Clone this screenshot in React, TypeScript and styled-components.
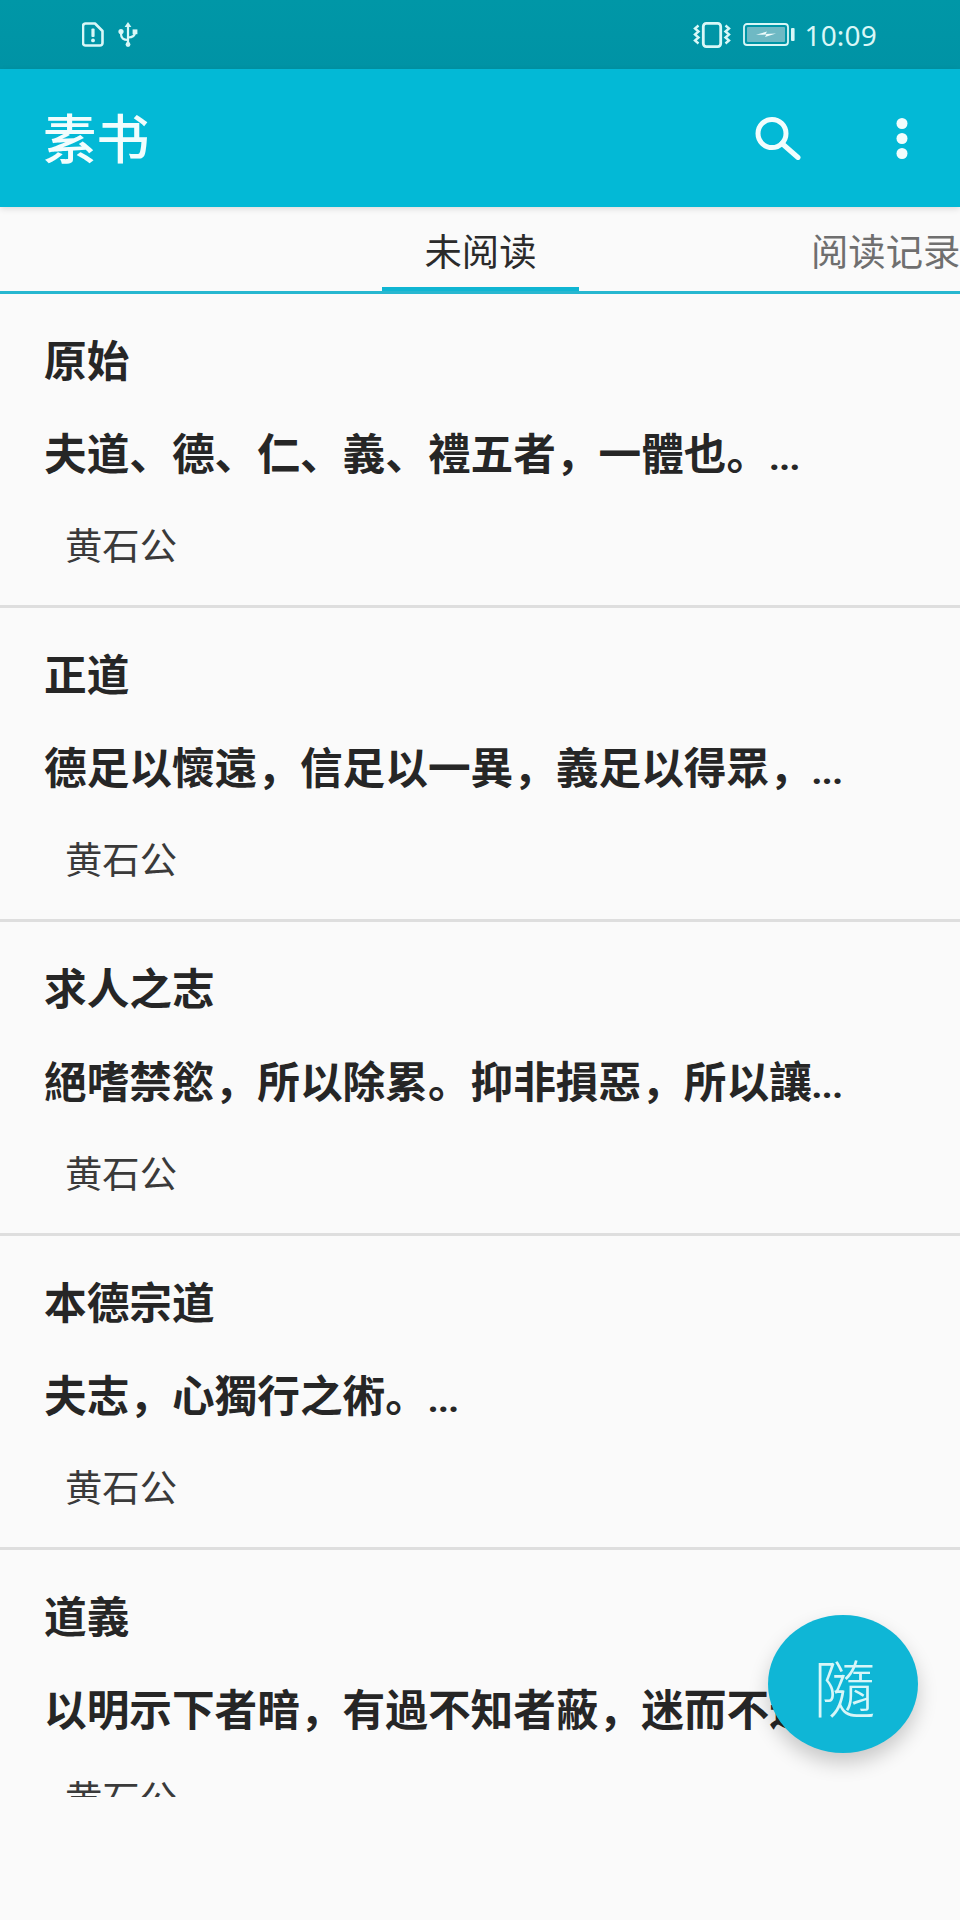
import styled, { createGlobalStyle } from "styled-components";

const GlobalStyle = createGlobalStyle`
  html, body {
    margin: 0;
    padding: 0;
    background: #fafafa;
  }
  * {
    box-sizing: border-box;
  }
`;

const Screen = styled.div`
  width: 960px;
  height: 1920px;
  position: relative;
  overflow: hidden;
  display: flex;
  flex-direction: column;
  background: #fafafa;
  font-family: Roboto, "Noto Sans CJK SC", sans-serif;
  color: #212121;
`;

const StatusBar = styled.div`
  height: 69px;
  flex: none;
  display: flex;
  align-items: center;
  justify-content: space-between;
  padding: 0 83px 0 82px;
  background: linear-gradient(#0097a7, #0093a5);
  color: #d9f7f7;
`;

const StatusGroup = styled.div<{ $gap: number }>`
  display: flex;
  align-items: center;
  gap: ${(p) => p.$gap}px;
`;

const Clock = styled.span`
  font-family: "Noto Sans", "Open Sans", sans-serif;
  font-size: 28px;
  line-height: 1;
  letter-spacing: 0.2px;
`;

const AppBar = styled.header`
  height: 138px;
  flex: none;
  display: flex;
  align-items: center;
  justify-content: space-between;
  padding: 0 52px 0 43px;
  background: #03b9d6;
  color: #f2fdfd;
  position: relative;
  z-index: 1;
  box-shadow: 0 2px 6px rgba(0, 0, 0, 0.12);
`;

const AppTitle = styled.h1`
  margin: 0;
  padding-top: 8px;
  font-size: 53.33px;
  line-height: 1;
  font-weight: 500;
`;

const AppActions = styled.div`
  display: flex;
  align-items: center;
  gap: 95px;
`;

const TabBar = styled.nav`
  height: 87px;
  flex: none;
  display: flex;
  padding-left: 382px;
  border-bottom: 3px solid #27b7d0;
  white-space: nowrap;
  overflow: hidden;
`;

const Tab = styled.div<{ $active?: boolean }>`
  flex: none;
  position: relative;
  width: ${(p) => (p.$active ? "197px" : "auto")};
  margin-left: ${(p) => (p.$active ? "0" : "232px")};
  display: flex;
  align-items: center;
  justify-content: center;
  padding-top: 9px;
  font-size: 37.33px;
  line-height: 1;
  color: ${(p) => (p.$active ? "#2b2b2b" : "#6f6f6f")};

  &::after {
    content: "";
    display: ${(p) => (p.$active ? "block" : "none")};
    position: absolute;
    left: 0;
    right: 0;
    bottom: 0;
    height: 4px;
    background: #0fb5d2;
  }
`;

const ListViewport = styled.div`
  height: 1503px;
  flex: none;
  overflow: hidden;
`;

const Article = styled.article`
  height: 314px;
  padding: 41px 44px 0;
  display: flex;
  flex-direction: column;
  border-bottom: 3px solid #dedede;

  &:last-child {
    border-bottom: none;
  }
`;

const ArticleTitle = styled.h2`
  margin: 0;
  font-size: 42.67px;
  line-height: 54px;
  font-weight: 700;
  color: #262626;
`;

const ArticleBody = styled.p`
  margin: 39px 0 0;
  font-size: 42.67px;
  line-height: 54px;
  font-weight: 700;
  color: #262626;
  white-space: nowrap;
`;

// the dots after a cut-off line sit smaller than the text around them
const MoreDots = styled.span`
  font-size: 34px;
  font-weight: 900;
`;

const ArticleAuthor = styled.div`
  margin: 37px 0 0 21px;
  font-size: 37.33px;
  line-height: 50px;
  color: #3a3a3a;
`;

const Fab = styled.button`
  position: absolute;
  left: 768px;
  top: 1615px;
  width: 150px;
  height: 138px;
  border: none;
  border-radius: 50%;
  padding: 3px 0 0 3px;
  display: flex;
  align-items: center;
  justify-content: center;
  background: #0fb6d6;
  color: #d8f6f8;
  font-family: "Noto Sans CJK TC", "Noto Sans CJK SC", sans-serif;
  font-size: 62px;
  font-weight: 300;
  line-height: 1;
  box-shadow: 0 10px 20px rgba(0, 0, 0, 0.2);
`;

const articles = [
  { title: "原始", body: "夫道、德、仁、義、禮五者，一體也。", more: true },
  { title: "正道", body: "德足以懷遠，信足以一異，義足以得眾，", more: true },
  { title: "求人之志", body: "絕嗜禁慾，所以除累。抑非損惡，所以讓", more: true },
  { title: "本德宗道", body: "夫志，心獨行之術。", more: true },
  { title: "道義", body: "以明示下者暗，有過不知者蔽，迷而不返", more: false },
];

function SimAlertIcon() {
  return (
    <svg width="22" height="25" viewBox="0 0 22 25" fill="none">
      <path
        d="M3.5 1.5h9.5l7.5 7.5v12a2.5 2.5 0 0 1-2.5 2.5h-14.5a2.5 2.5 0 0 1-2.5-2.5v-17a2.5 2.5 0 0 1 2.5-2.5z"
        stroke="currentColor"
        strokeWidth="2.6"
        strokeLinejoin="round"
      />
      <rect x="9.4" y="6.5" width="3.2" height="8.5" rx="1" fill="currentColor" />
      <circle cx="11" cy="18.4" r="1.9" fill="currentColor" />
    </svg>
  );
}

function UsbIcon() {
  return (
    <svg width="20" height="25" viewBox="0 0 20 25" fill="none" stroke="currentColor" strokeWidth="2.2">
      <path d="M10 4v18" />
      <path d="M10 18c-4.5 0-7-1.5-7-6v-2M10 15.5c4.5 0 7-1.5 7-5.5" />
      <path d="M10 0l3.4 5H6.6z" fill="currentColor" stroke="none" />
      <circle cx="10" cy="22.5" r="2.4" fill="currentColor" stroke="none" />
      <circle cx="3" cy="9.5" r="2.6" fill="currentColor" stroke="none" />
      <rect x="14.6" y="7.4" width="4.8" height="4.8" fill="currentColor" stroke="none" />
    </svg>
  );
}

function VibrateIcon() {
  return (
    <svg width="38" height="26" viewBox="0 0 38 26" fill="none" stroke="currentColor">
      <rect x="10.3" y="1.4" width="17.4" height="23.2" rx="3" strokeWidth="2.8" />
      <path d="M5.5 3.5l-3.5 3 3.5 3-3.5 3 3.5 3-3.5 3 3.5 3" strokeWidth="2.4" />
      <path d="M32.5 3.5l3.5 3-3.5 3 3.5 3-3.5 3 3.5 3-3.5 3" strokeWidth="2.4" />
    </svg>
  );
}

function BatteryIcon() {
  return (
    <svg width="55" height="23" viewBox="0 0 55 23" fill="none">
      <rect x="4" y="1" width="44" height="21" rx="3" stroke="currentColor" strokeWidth="1.8" />
      <rect x="7" y="4" width="38" height="15" rx="1" fill="#6fb9c4" />
      <rect x="51" y="5" width="3.6" height="13" rx="1" fill="currentColor" />
      <path d="M16 11.8l11-3.3-1.4 2.4 10.4-.3-11 3.4 1.4-2.4z" fill="#eefcfc" />
    </svg>
  );
}

function SearchIcon() {
  return (
    <svg width="46" height="43" viewBox="0 0 46 43" fill="none" stroke="currentColor" strokeWidth="5">
      <circle cx="17" cy="16.5" r="14" />
      <path d="M27 26.5l16 14" strokeLinecap="round" />
    </svg>
  );
}

function MoreIcon() {
  return (
    <svg width="12" height="41" viewBox="0 0 12 41" fill="currentColor">
      <circle cx="6" cy="5.5" r="5.5" />
      <circle cx="6" cy="20.5" r="5.5" />
      <circle cx="6" cy="35.5" r="5.5" />
    </svg>
  );
}

export default function App() {
  return (
    <Screen>
      <GlobalStyle />
      <StatusBar>
        <StatusGroup $gap={14}>
          <SimAlertIcon />
          <UsbIcon />
        </StatusGroup>
        <StatusGroup $gap={9}>
          <VibrateIcon />
          <BatteryIcon />
          <Clock>10:09</Clock>
        </StatusGroup>
      </StatusBar>
      <AppBar>
        <AppTitle>素书</AppTitle>
        <AppActions>
          <SearchIcon />
          <MoreIcon />
        </AppActions>
      </AppBar>
      <TabBar>
        <Tab $active>未阅读</Tab>
        <Tab>阅读记录</Tab>
      </TabBar>
      <ListViewport>
        {articles.map((a) => (
          <Article key={a.title}>
            <ArticleTitle>{a.title}</ArticleTitle>
            <ArticleBody>
              {a.body}
              {a.more && <MoreDots>...</MoreDots>}
            </ArticleBody>
            <ArticleAuthor>黄石公</ArticleAuthor>
          </Article>
        ))}
      </ListViewport>
      <Fab>隨</Fab>
    </Screen>
  );
}
